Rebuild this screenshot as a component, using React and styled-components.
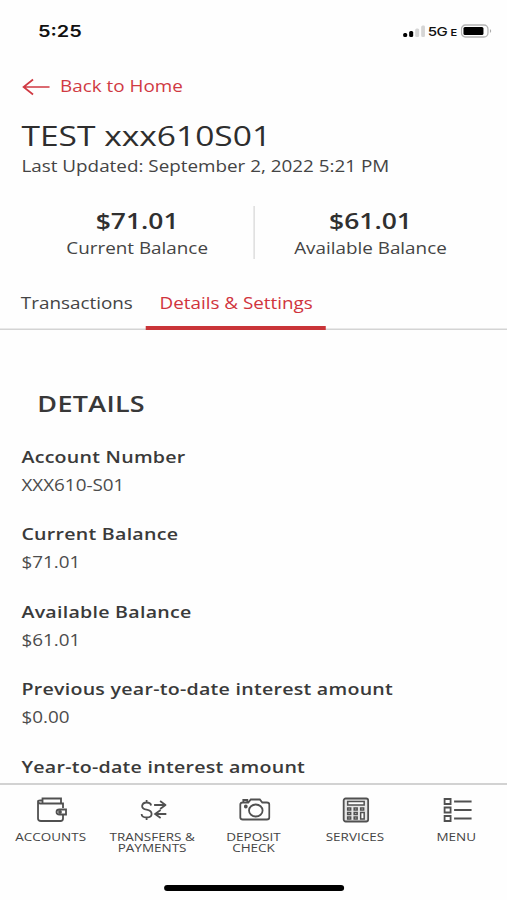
import React from "react";
import styled, { createGlobalStyle } from "styled-components";

const STRETCH = 507 / 414;

const Global = createGlobalStyle`
  *, *::before, *::after { box-sizing: border-box; }
  html, body { margin: 0; padding: 0; background: #fefefe; overflow: hidden; }
`;

const Viewport = styled.div`
  width: 507px;
  height: 900px;
  overflow: hidden;
  background: #fefefe;
`;

const Screen = styled.div`
  width: 414px;
  height: 900px;
  display: flex;
  flex-direction: column;
  transform: scaleX(${STRETCH});
  transform-origin: 0 0;
  font-family: "Open Sans", sans-serif;
  font-size: 15.4px;
  line-height: 26px;
  color: #444;
  white-space: nowrap;
`;

const Art = styled.svg`
  display: block;
  flex: none;
  width: ${(p) => p.$w / STRETCH}px;
  height: ${(p) => p.$h}px;
  fill: none;
  stroke: ${(p) => p.$color || "#505050"};
  stroke-width: ${(p) => p.$line || 1.8};
`;

const Icon = ({ w, h, color, line, children }) => (
  <Art $w={w} $h={h} $color={color} $line={line} viewBox={`0 0 ${w} ${h}`} preserveAspectRatio="none" aria-hidden="true">
    {children}
  </Art>
);

const StatusBar = styled.header`
  flex: none;
  display: flex;
  justify-content: space-between;
  height: 74px;
  padding: 19px 11.5px 0 31px;
  font-family: Inter, sans-serif;
  line-height: 24px;
  color: #111;
`;

const Clock = styled.time`
  font-size: 16.3px;
  font-weight: 600;
`;

const Signals = styled.div`
  display: flex;
  align-items: center;
  height: 24px;
`;

const Network = styled.span`
  display: flex;
  align-items: baseline;
  gap: 2.5px;
  margin: 2px 3.5px 0 2px;
  font-size: 12.3px;
  font-weight: 500;
  letter-spacing: -0.4px;
  small { font-size: 9px; font-weight: 600; }
`;

const BackLink = styled.a`
  flex: none;
  display: flex;
  align-items: center;
  gap: 8px;
  height: 24px;
  padding: 2px 0 0 18.2px;
  color: #d03a43;
`;

const Heading = styled.section`
  flex: none;
  padding: 19px 17.5px 0;
`;

const Title = styled.h1`
  margin: 0;
  font-size: 27.4px;
  line-height: 37px;
  font-weight: 400;
  color: #2e2e2e;
`;

const Updated = styled.p`
  margin: 0;
`;

const Balances = styled.section`
  flex: none;
  display: grid;
  grid-template-columns: 1fr 1fr;
  height: 53px;
  margin: 26px 17px 0;
  text-align: center;
`;

const Balance = styled.div`
  height: 53px;
  & + & { border-left: 1.6px solid #d6d6d6; }
`;

const Amount = styled.div`
  font-size: 21.6px;
  line-height: 30px;
  font-weight: 600;
  color: #303030;
`;

const Tabs = styled.nav`
  flex: none;
  display: flex;
  height: 39px;
  margin-top: 32px;
  padding-left: 6px;
  box-shadow: inset 0 -1.5px #d4d4d4;
`;

const Tab = styled.a`
  padding: 0 10.8px 0 11px;
  border-bottom: 4px solid ${(p) => (p.$active ? "#c93438" : "transparent")};
  color: ${(p) => (p.$active ? "#d0333d" : "inherit")};
`;

const Details = styled.main`
  flex: none;
  height: 453px;
  padding: 58px 17.5px 0;
  overflow: hidden;
`;

const SectionTitle = styled.h2`
  margin: 0 0 26.5px 13px;
  font-size: 22px;
  line-height: 30px;
  font-weight: 600;
  letter-spacing: 0.25px;
  color: #383838;
`;

const Fields = styled.dl`
  display: grid;
  gap: 25.5px;
  margin: 0;
`;

const Field = styled.div`
  height: 52px;
`;

const Label = styled.dt`
  font-size: 16px;
  line-height: 24px;
  font-weight: 600;
  letter-spacing: 0.21px;
  color: #3a3a3a;
`;

const Value = styled.dd`
  margin: 4px 0 0;
  color: #4c4c4c;
`;

const BottomNav = styled.nav`
  flex: none;
  display: grid;
  grid-template-columns: repeat(5, 1fr);
  height: 102px;
  padding-top: 11.5px;
  border-top: 2px solid #d2d2d2;
`;

const NavItem = styled.a`
  display: flex;
  flex-direction: column;
  align-items: center;
  gap: 8.3px;
  font-size: 11px;
  line-height: 11px;
  text-align: center;
  white-space: pre-line;
  color: #444;
  ${Art} { margin-left: 1.6px; }
`;

const HomeBar = styled.div`
  flex: none;
  align-self: center;
  width: 147px;
  height: 6px;
  border-radius: 2.5px / 3px;
  background: #000;
`;

const Wallet = () => (
  <Icon w={32} h={26}>
    <path d="M27.500 11V6.500H5Q2.500 6.500 2.500 4.500Q2.500 3.500 4.500 3.500H7M2.500 4.500V21.500Q2.500 24 5.500 24H25Q27.500 24 27.500 21.500V18M7 6V1.500H25.500V6M30.500 12.500H24Q21 12.500 21 15T24 17.500H30.500Z" />
    <circle cx="24.500" cy="15" r="1" />
  </Icon>
);

const Transfer = () => (
  <Icon w={28} h={26}>
    <path d="M11.500 8.500Q11 5.500 7 5.500T2.500 9Q2.500 12 7 12.700Q12 13.500 12 17Q12 20.500 7 20.500T2 17M7 3V5.500M7 20.500V23M14.500 8H26M20.500 4L26 8L20.500 12M27 17H15.500M21 13L15.500 17L21 21" />
  </Icon>
);

const Camera = () => (
  <Icon w={32} h={26}>
    <path d="M4 5.500H9.500L12 2.500H21L23.500 5.500H28Q30.500 5.500 30.500 7.500V20.500Q30.500 22.500 28 22.500H4Q1.500 22.500 1.500 20.500V7.500Q1.500 5.500 4 5.500ZM4.500 5V3H8.500V5" />
    <ellipse cx="17" cy="13.500" rx="6.800" ry="6" />
    <circle cx="7" cy="9.500" r="1" />
  </Icon>
);

const Calculator = () => (
  <Icon w={28} h={26}>
    <rect x="2" y="1.500" width="24.500" height="23" rx="2" fill="#e6e6e6" />
    <path fill="#fefefe" strokeWidth="1.500" d="M6 4.500H22.500V8H6ZM6 11H9V13H6ZM12.500 11H15.500V13H12.500ZM19 11H22V13H19ZM6 15.500H9V17.500H6ZM12.500 15.500H15.500V17.500H12.500ZM6 20H9V22H6ZM12.500 20H15.500V22H12.500ZM19 15.500H22.500V22H19Z" />
  </Icon>
);

const Menu = () => (
  <Icon w={30} h={26}>
    <path d="M2.500 2H8.500V7H2.500ZM2.500 10.500H8.500V15.500H2.500ZM2.500 19H8.500V24H2.500ZM12 4.500H29.500M12 13H29.500M12 21.500H29.500" />
  </Icon>
);

const FIELDS = [
  ["Account Number", "XXX610-S01"],
  ["Current Balance", "$71.01"],
  ["Available Balance", "$61.01"],
  ["Previous year-to-date interest amount", "$0.00"],
  ["Year-to-date interest amount", ""],
];

const NAV = [
  ["ACCOUNTS", Wallet],
  ["TRANSFERS &\nPAYMENTS", Transfer],
  ["DEPOSIT\nCHECK", Camera],
  ["SERVICES", Calculator],
  ["MENU", Menu],
];

export default function App() {
  return (
    <Viewport>
      <Global />
      <Screen>
        <StatusBar>
          <Clock>5:25</Clock>
          <Signals>
            <Icon w={24} h={14}>
              <g stroke="none">
                <rect x="1.500" y="9" width="4" height="4" rx="1.500" fill="#000" />
                <rect x="7.500" y="7" width="4" height="6" rx="1.500" fill="#000" />
                <rect x="13.500" y="4.500" width="4" height="8.500" rx="1.500" fill="#d5d5d5" />
                <rect x="19.500" y="1.500" width="4" height="11.500" rx="1.500" fill="#d5d5d5" />
              </g>
            </Icon>
            <Network>5G<small>E</small></Network>
            <Icon w={32} h={14} color="#b4b4b4" line={1.3}>
              <rect x="1" y="1" width="26.500" height="12" rx="4" />
              <rect x="3" y="3" width="20" height="8" rx="1.500" fill="#000" stroke="none" />
              <path d="M29.500 5V9Q32 7 29.500 5Z" fill="#aaa" stroke="none" />
            </Icon>
          </Signals>
        </StatusBar>
        <BackLink>
          <Icon w={28} h={18} color="#d03a43" line={1.7}>
            <path d="M27.500 9H1.500M11 1.500L1.500 9L11 16.500" />
          </Icon>
          Back to Home
        </BackLink>
        <Heading>
          <Title>TEST xxx610S01</Title>
          <Updated>Last Updated: September 2, 2022 5:21 PM</Updated>
        </Heading>
        <Balances>
          <Balance><Amount>$71.01</Amount>Current Balance</Balance>
          <Balance><Amount>$61.01</Amount>Available Balance</Balance>
        </Balances>
        <Tabs>
          <Tab>Transactions</Tab>
          <Tab $active>Details &amp; Settings</Tab>
        </Tabs>
        <Details>
          <SectionTitle>DETAILS</SectionTitle>
          <Fields>
            {FIELDS.map(([label, value]) => (
              <Field key={label}>
                <Label>{label}</Label>
                <Value>{value}</Value>
              </Field>
            ))}
          </Fields>
        </Details>
        <BottomNav>
          {NAV.map(([label, Glyph]) => (
            <NavItem key={label}><Glyph />{label}</NavItem>
          ))}
        </BottomNav>
        <HomeBar />
      </Screen>
    </Viewport>
  );
}
